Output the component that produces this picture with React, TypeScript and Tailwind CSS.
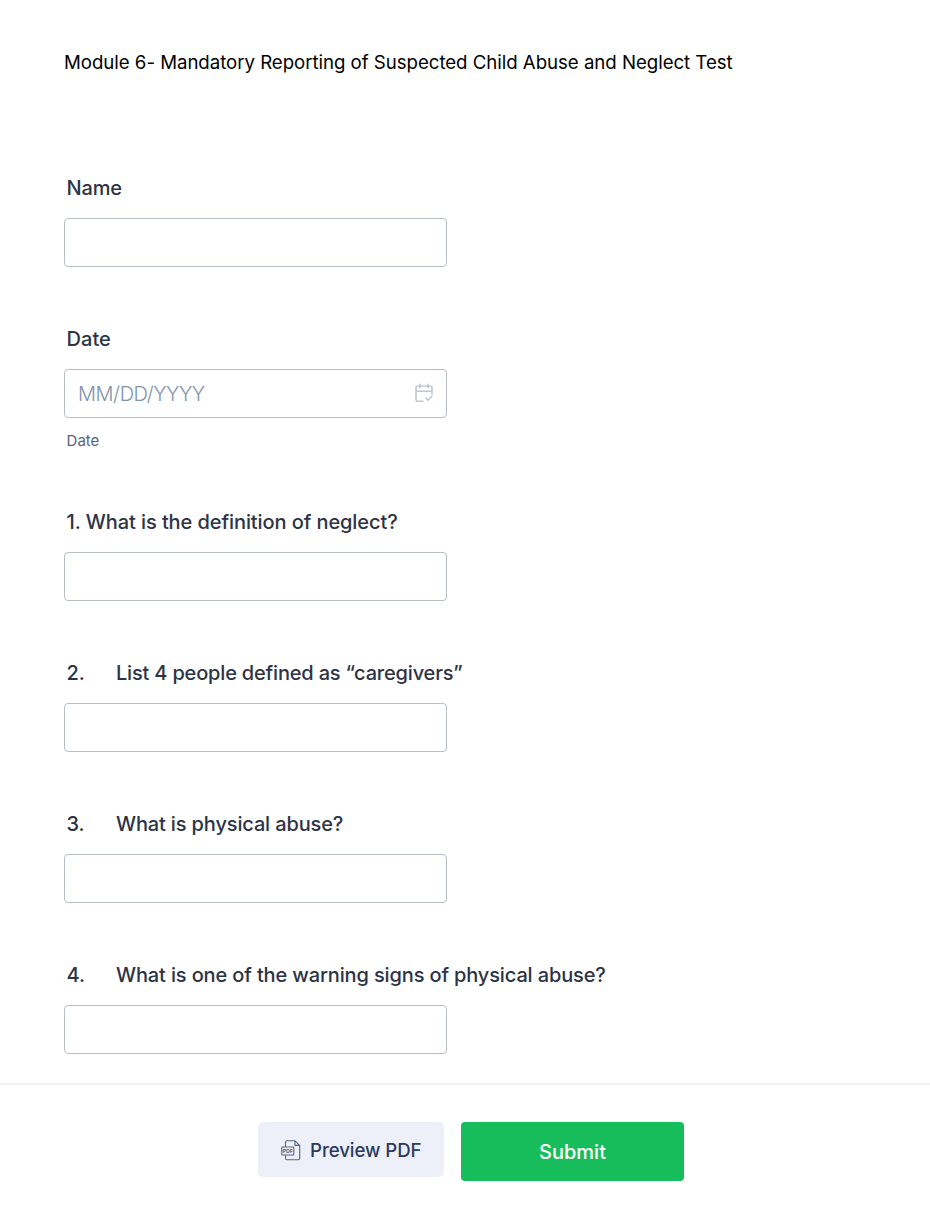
import { useState } from 'react';

interface Question {
  id: string;
  label: string;
  number?: string;
  tracking: string;
}

const questions: Question[] = [
  { id: 'q1', label: '1. What is the definition of neglect?', tracking: 'tracking-[-0.085px]' },
  { id: 'q2', number: '2.', label: 'List 4 people defined as “caregivers”', tracking: 'tracking-[-0.18px]' },
  { id: 'q3', number: '3.', label: 'What is physical abuse?', tracking: 'tracking-[-0.14px]' },
  { id: 'q4', number: '4.', label: 'What is one of the warning signs of physical abuse?', tracking: 'tracking-[-0.135px]' },
];

const labelClass = 'h-[45px] pl-[2.6px] text-[20px] font-medium leading-[30px]';

const inputClass =
  'block h-[49px] w-[383px] rounded-[4px] border border-[#b8bdc9] bg-white px-[13px] text-[20px] text-[#2c3345] placeholder:font-light placeholder:tracking-[-0.45px] placeholder:text-[#8094ab] focus:outline-none';

function CalendarIcon() {
  return (
    <svg
      viewBox="0 0 18 20"
      className="absolute right-[14px] top-[14px] h-5 w-[18px]"
      fill="none"
      stroke="#c3c6d6"
      strokeWidth="1.6"
      strokeLinecap="round"
      strokeLinejoin="round"
    >
      <path d="M8 18.3H3a2 2 0 0 1-2-2V5a2 2 0 0 1 2-2h12a2 2 0 0 1 2 2v6M1 8.3h16M5 1.2v3.6M13 1.2v3.6M11 15.3l2 2 3.8-4" />
    </svg>
  );
}

function PdfIcon() {
  return (
    <svg viewBox="0 0 20 21" className="h-[21px] w-5" fill="none" stroke="#57627d" strokeWidth="1.1">
      <path d="M4.5 7V2.2a1.5 1.5 0 0 1 1.5-1.5h8l4.7 4.7v12.9a1.5 1.5 0 0 1-1.5 1.5H6a1.5 1.5 0 0 1-1.5-1.5V15M14 .7v4.7h4.7" />
      <rect x=".8" y="7" width="12" height="8" rx=".8" />
      <text
        x="6.8"
        y="13"
        textAnchor="middle"
        fill="#57627d"
        stroke="none"
        fontSize="5.2"
        fontWeight="700"
        fontFamily="Inter, sans-serif"
      >
        PDF
      </text>
    </svg>
  );
}

export default function App() {
  const [values, setValues] = useState<Record<string, string>>({});

  const handleChange = (id: string, value: string) => {
    setValues((prev) => ({ ...prev, [id]: value }));
  };

  return (
    <form
      onSubmit={(e) => e.preventDefault()}
      className="flex h-[1231px] w-[930px] flex-col bg-white font-['Inter',sans-serif] text-[#2c3345]"
    >
      {/* Title */}
      <h1 className="h-[173px] shrink-0 pl-16 pt-[51px] text-[18.67px] leading-6 tracking-[-0.04px] text-black">
        Module 6- Mandatory Reporting of Suspected Child Abuse and Neglect Test
      </h1>

      {/* Name */}
      <div className="h-[151px] shrink-0 pl-16">
        <label htmlFor="name" className={`block tracking-[-0.2px] ${labelClass}`}>
          Name
        </label>
        <input
          id="name"
          value={values.name ?? ''}
          onChange={(e) => handleChange('name', e.target.value)}
          className={inputClass}
        />
      </div>

      {/* Date */}
      <div className="h-[183px] shrink-0 pl-16">
        <label htmlFor="date" className={`block ${labelClass}`}>
          Date
        </label>
        <div className="relative w-[383px]">
          <input
            id="date"
            placeholder="MM/DD/YYYY"
            value={values.date ?? ''}
            onChange={(e) => handleChange('date', e.target.value)}
            className={inputClass}
          />
          <CalendarIcon />
        </div>
        <p className="pl-[2.6px] pt-3 text-[15px] leading-[22px] text-[#57647e]">Date</p>
      </div>

      {/* Questions */}
      {questions.map((q) => (
        <div key={q.id} className="h-[151px] shrink-0 pl-16">
          <label htmlFor={q.id} className={`flex ${labelClass} ${q.tracking}`}>
            {q.number && <span className="w-[49.4px]">{q.number}</span>}
            <span>{q.label}</span>
          </label>
          <input
            id={q.id}
            value={values[q.id] ?? ''}
            onChange={(e) => handleChange(q.id, e.target.value)}
            className={inputClass}
          />
        </div>
      ))}

      {/* Footer buttons */}
      <div className="-mt-7 flex grow items-start gap-[17px] border-t-2 border-[#edf0f5] pl-[258px] pt-[37px]">
        <button
          type="button"
          className="flex h-[55px] w-[186px] items-center gap-[9px] rounded-[5px] bg-[#edf0f8] pl-[23px] pt-[2px] text-[18.67px] font-medium tracking-[-0.08px] text-[#2a3a5f]"
        >
          <PdfIcon />
          <span className="whitespace-nowrap pt-px">Preview PDF</span>
        </button>
        <button
          type="submit"
          className="h-[59px] w-[223px] rounded-[4px] bg-[#18bd5b] pt-px text-[20px] font-medium text-white"
        >
          Submit
        </button>
      </div>
    </form>
  );
}
